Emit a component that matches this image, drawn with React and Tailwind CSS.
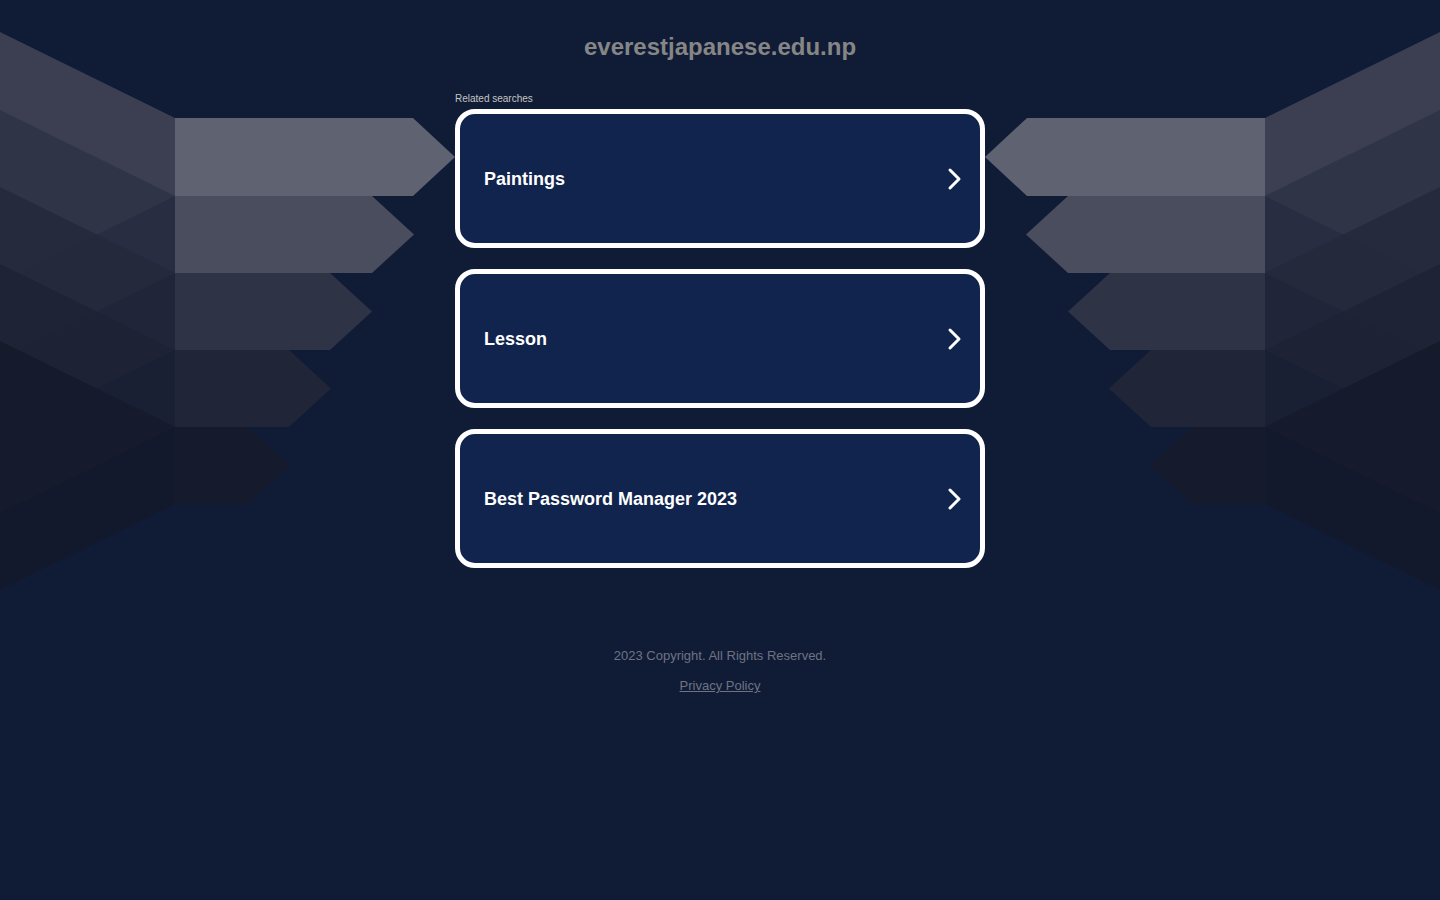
const bands = [
  { top: 118, bottom: 196, end: 413, tail: '#3b3f51', tailOpacity: 1, body: '#5f6271' },
  { top: 196, bottom: 273, end: 372, tail: '#2e3245', tailOpacity: 0.8, body: '#4a4d5d' },
  { top: 273, bottom: 350, end: 330, tail: '#24283b', tailOpacity: 0.8, body: '#2f3346' },
  { top: 350, bottom: 427, end: 289, tail: '#1d2235', tailOpacity: 0.8, body: '#212538' },
  { top: 427, bottom: 504, end: 248, tail: '#14192b', tailOpacity: 0.8, body: '#151a2d' },
]

const searches = ['Paintings', 'Lesson', 'Best Password Manager 2023']

// ala decorativa del fondo, la derecha es la misma volteada
const Wing = ({ className }) => (
  <svg className={className} width="455" height="600" viewBox="0 0 455 600">
    {bands.map((b) => (
      <polygon
        key={`t${b.top}`}
        points={`175,${b.top} 0,${b.top - 86} 0,${b.bottom + 86} 175,${b.bottom}`}
        fill={b.tail}
        fillOpacity={b.tailOpacity}
      />
    ))}
    {bands.map((b) => (
      <polygon
        key={`b${b.top}`}
        points={`175,${b.top} ${b.end},${b.top} ${b.end + 42},${(b.top + b.bottom) / 2} ${b.end},${b.bottom} 175,${b.bottom}`}
        fill={b.body}
      />
    ))}
  </svg>
)

const SearchCard = ({ label }) => (
  <a
    href="#"
    className="flex h-[139px] w-[530px] items-center justify-between rounded-[20px] border-[5px] border-white bg-[#11244d] pl-[24px] pr-[16px]"
  >
    <span className="pt-[2px] text-[18px] font-bold text-white">{label}</span>
    <svg width="18" height="24" viewBox="0 0 18 24" fill="none">
      <polyline points="4,3 13,12 4,21" stroke="white" strokeWidth="3" strokeLinecap="round" strokeLinejoin="round" />
    </svg>
  </a>
)

export default function App() {
  return (
    <div
      className="relative min-h-[900px] w-full overflow-hidden bg-[#101c36]"
      style={{ fontFamily: '"Liberation Sans", Arial, sans-serif' }}
    >
      <Wing className="absolute left-0 top-0" />
      <Wing className="absolute right-0 top-0 -scale-x-100" />

      <div className="relative flex flex-col items-center pt-[33px]">
        <h1 className="text-[24px] font-bold leading-[28px] text-[#868686]">everestjapanese.edu.np</h1>

        <div className="mt-[31px] w-[530px]">
          <p className="text-[10px] leading-[13px] text-[#c4c4c4]">Related searches</p>
          <div className="mt-[4px] flex flex-col gap-[21px]">
            {searches.map((s) => (
              <SearchCard key={s} label={s} />
            ))}
          </div>
        </div>

        <p className="mt-[80px] text-[13px] leading-[15px] text-[#6e7384]">2023 Copyright. All Rights Reserved.</p>
        <a href="#" className="mt-[15px] text-[13px] leading-[15px] text-[#6e7384] underline">
          Privacy Policy
        </a>
      </div>
    </div>
  )
}
